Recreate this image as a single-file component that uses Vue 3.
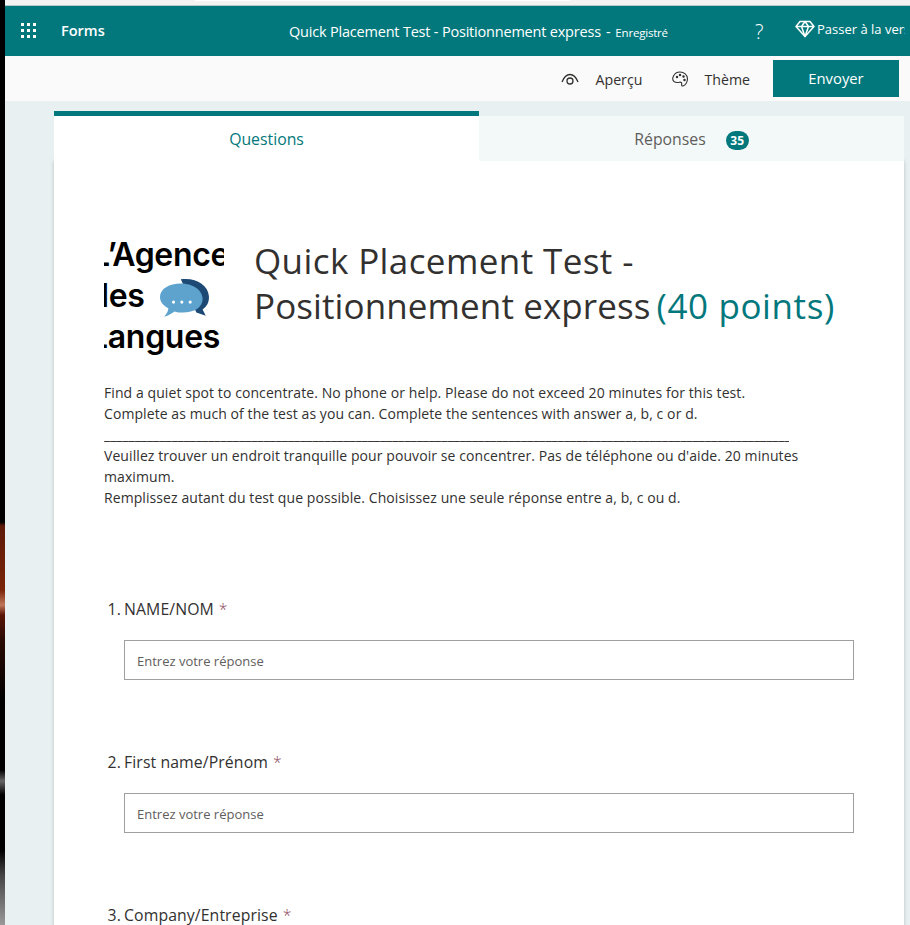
<script setup>
const questions = [
  { num: '1.', label: 'NAME/NOM' },
  { num: '2.', label: 'First name/Prénom' },
  { num: '3.', label: 'Company/Entreprise' }
]
const dots = [0, 1, 2, 3, 4, 5, 6, 7, 8]
const underscores = '_'.repeat(125)
</script>

<template>
  <div class="page">
    <!-- bout de fond d'ecran a gauche -->
    <div class="wallpaper"></div>
    <div class="window">
      <div class="top-edge"><div class="top-edge-tab"></div></div>
      <header class="header">
        <div class="waffle">
          <span v-for="d in dots" :key="d" class="waffle-dot"></span>
        </div>
        <span class="brand">Forms</span>
        <div class="doc-title">
          <span>Quick Placement Test - Positionnement express</span>
          <span class="sep">-</span>
          <span class="saved">Enregistré</span>
        </div>
        <span class="help">?</span>
        <div class="upgrade">
          <svg width="20" height="18" viewBox="0 0 20 18" fill="none" stroke="#fff" stroke-width="1.5" stroke-linejoin="round">
            <path d="M5 1.500h10l4 5-9 10-9-10z" />
            <path d="M1 6.500h18M6.500 6.500l3.500 10 3.500-10M6.500 6.500l3.500-5 3.500 5" />
          </svg>
          <span class="upgrade-text">Passer à la version</span>
        </div>
      </header>

      <div class="command-bar">
        <div class="command command-preview">
          <svg width="18" height="13" viewBox="0 0 18 13" fill="none" stroke="#323130" stroke-width="1.300">
            <path d="M1 9c2-5 5-7.500 8-7.500s6 2.500 8 7.500" />
            <circle cx="9" cy="8" r="3" />
          </svg>
          <span>Aperçu</span>
        </div>
        <div class="command command-theme">
          <svg width="17" height="17" viewBox="0 0 17 17" fill="none" stroke="#323130" stroke-width="1.100">
            <path d="M8 1c4 0 7.500 2.800 7.500 6.800 0 3.500-2.200 6.700-4.500 7.200-1.500.3-1.500-1-1.300-2 .2-1.300-.7-2.200-2.200-1.800-2 .5-4 .4-5.500-.7C.6 9.300.5 7 1.500 5 2.700 2.500 5 1 8 1z" />
            <circle cx="5" cy="6" r=".7" fill="#323130" />
            <circle cx="8" cy="4" r=".7" fill="#323130" />
            <circle cx="11.500" cy="5.500" r=".7" fill="#323130" />
            <circle cx="12.500" cy="9" r=".7" fill="#323130" />
          </svg>
          <span>Thème</span>
        </div>
        <button class="send">Envoyer</button>
      </div>

      <div class="content">
        <div class="tabs">
          <div class="tab tab-active"><span>Questions</span></div>
          <div class="tab tab-other">
            <span class="tab-label">Réponses</span>
            <span class="badge">35</span>
          </div>
        </div>

        <main class="card">
          <section class="title-row">
            <!-- le logo est coupe a gauche et a droite comme sur l'original -->
            <div class="logo">
              <div class="logo-line logo-first">L’Agence</div>
              <div class="logo-line logo-mid">
                <span>des</span>
                <svg class="bubble" width="52" height="42" viewBox="0 0 50 40">
                  <path d="M20 1c14-2 26 5 27 16 .5 6-2 10-6 13l3 6-9-3z" fill="#1d4a75" />
                  <path d="M20 5c11 0 21 6 21 15 0 8-8 13-19 13-3 0-6 0-8-1-3 2-6 4-10 5 2-2 4-5 4-8C3 26 0 23 0 18 0 10 9 5 20 5z" fill="#5ea3cd" />
                  <circle cx="13" cy="23" r="1.500" fill="#fff" />
                  <circle cx="21" cy="23" r="1.500" fill="#fff" />
                  <circle cx="29" cy="23" r="1.500" fill="#fff" />
                </svg>
              </div>
              <div class="logo-line logo-last">Langues</div>
            </div>
            <h1 class="title">
              <span class="title-first">Quick Placement Test -</span><br />
              Positionnement express<span class="points">(40 points)</span>
            </h1>
          </section>

          <section class="intro">
            <p>Find a quiet spot to concentrate. No phone or help. Please do not exceed 20 minutes for this test.</p>
            <p>Complete as much of the test as you can. Complete the sentences with answer a, b, c or d.</p>
            <p class="rule">{{ underscores }}</p>
            <p>Veuillez trouver un endroit tranquille pour pouvoir se concentrer. Pas de téléphone ou d'aide. 20 minutes maximum.</p>
            <p>Remplissez autant du test que possible. Choisissez une seule réponse entre a, b, c ou d.</p>
          </section>

          <section v-for="q in questions" :key="q.num" class="question">
            <div class="question-label">
              <span class="question-num">{{ q.num }}</span>
              <span>{{ q.label }}</span>
              <span class="star">*</span>
            </div>
            <input class="answer" type="text" placeholder="Entrez votre réponse" />
          </section>
        </main>
      </div>
    </div>
  </div>
</template>

<style scoped>
.page {
  display: flex;
  width: 910px;
  height: 925px;
  overflow: hidden;
  font-family: "Open Sans", "Noto Sans", sans-serif;
  color: #323130;
}

.wallpaper {
  width: 5px;
  flex: none;
  background: linear-gradient(to bottom, #000 0, #000 522px, #5e1a08 526px, #7a2408 590px, #c0765a 605px, #5a1405 615px, #2a0a04 640px, #000 700px, #000 770px, #666 781px, #000 795px, #000 850px, #444 875px, #999 925px);
}

.window {
  flex: 1;
  min-width: 0;
  display: flex;
  flex-direction: column;
  background: #e8f0f2;
}

.top-edge {
  height: 6px;
  flex: none;
  background: #f3f3f3;
  border-bottom: 1px solid #b9c9c9;
  box-sizing: border-box;
  position: relative;
}

.top-edge-tab {
  position: absolute;
  left: 190px;
  right: 340px;
  top: 0;
  height: 1px;
  background: #fff;
}

.header {
  height: 50px;
  flex: none;
  display: flex;
  align-items: center;
  background: #03787c;
  color: #fff;
  white-space: nowrap;
  overflow: hidden;
}

.waffle {
  display: grid;
  grid-template-columns: repeat(3, 3px);
  gap: 3px;
  margin-left: 16px;
  margin-bottom: 1px;
  flex: none;
}

.waffle-dot {
  width: 3px;
  height: 3px;
  background: #fff;
}

.brand {
  margin-left: 25px;
  font-size: 14.500px;
  font-weight: 600;
  width: 228px;
  margin-bottom: 2px;
  flex: none;
}

.doc-title {
  font-size: 14.500px;
  width: 466px;
  display: flex;
  align-items: baseline;
  letter-spacing: -.2px;
  flex: none;
}

.sep {
  margin: 0 5px;
}

.saved {
  font-size: 11.500px;
}

.help {
  font-size: 20px;
  font-weight: 300;
  width: 40px;
  flex: none;
}

.upgrade {
  display: flex;
  align-items: center;
  gap: 2px;
  margin-bottom: 4px;
  flex: none;
}

.upgrade-text {
  font-size: 13px;
  width: 88px;
  overflow: hidden;
}

.command-bar {
  height: 45px;
  flex: none;
  display: flex;
  align-items: center;
  justify-content: flex-end;
  background: #fafafa;
  font-size: 14.200px;
  padding-right: 11px;
}

.command {
  display: flex;
  align-items: center;
  padding-top: 1px;
}

.command-preview {
  gap: 16px;
  margin-right: 30px;
}

.command-theme {
  gap: 15px;
  margin-right: 23px;
}

.send {
  width: 126px;
  height: 37px;
  margin-bottom: 1px;
  border: none;
  background: #03787c;
  color: #fff;
  font: inherit;
  font-size: 14.800px;
}

.content {
  margin: 10px 6px 0 49px;
}

.tabs {
  display: flex;
  height: 50px;
  position: relative;
  z-index: 1;
}

.tab {
  display: flex;
  align-items: center;
  justify-content: center;
  font-size: 15.800px;
  box-sizing: border-box;
}

.tab-active {
  width: 425px;
  background: #fff;
  border-top: 5px solid #03787c;
  color: #03787c;
}

.tab-other {
  flex: 1;
  margin-top: 5px;
  background: #f3f8f9;
  color: #605e5c;
  gap: 20px;
}

.badge {
  width: 23px;
  height: 19px;
  margin-top: 3px;
  border-radius: 10px;
  background: #03787c;
  color: #fff;
  font-size: 12px;
  font-weight: 700;
  line-height: 19px;
  text-align: center;
}

.card {
  background: #fff;
  padding: 0 50px;
  height: 800px;
  box-shadow: 0 0 4px rgba(0, 0, 0, .2);
}

.title-row {
  display: flex;
  padding-top: 77px;
}

.logo {
  width: 120px;
  height: 122px;
  margin-top: -4px;
  overflow: hidden;
  flex: none;
  font-family: Inter, "Liberation Sans", sans-serif;
  font-weight: 600;
  font-size: 32px;
  line-height: 41px;
  color: #000;
  white-space: nowrap;
}

.logo-line {
  margin-left: -15px;
  letter-spacing: -.3px;
}

.logo-first {
  margin-left: -12px;
}

.logo-last {
  margin-left: -14px;
}

.logo-mid {
  display: flex;
  align-items: center;
  gap: 15px;
  height: 41px;
}

.bubble {
  flex: none;
  transform: translateY(3px);
}

.title {
  margin: 0 0 0 30px;
  font-size: 35px;
  font-weight: 400;
  line-height: 45px;
  white-space: nowrap;
  color: #323130;
  letter-spacing: .1px;
}

.title-first {
  letter-spacing: .4px;
}

.points {
  margin-left: 6px;
  color: #03787c;
  letter-spacing: .6px;
}

.intro {
  margin-top: 26px;
  width: 710px;
  font-size: 14px;
  line-height: 21px;
  letter-spacing: .08px;
}

.intro p {
  margin: 0;
}

.intro .rule {
  width: 685px;
  overflow: hidden;
  white-space: nowrap;
  letter-spacing: 0;
}

.question {
  margin-bottom: 71px;
}

.intro + .question {
  margin-top: 90px;
}

.question-label {
  display: flex;
  font-size: 15.800px;
  line-height: 22px;
  margin-bottom: 20px;
  letter-spacing: .1px;
}

.question-num {
  width: 20px;
  text-align: right;
  padding-right: 3px;
  box-sizing: border-box;
}

.star {
  margin-left: 5px;
  color: #8e4a5c;
  font-weight: 300;
}

.answer {
  display: block;
  margin-left: 20px;
  width: 730px;
  height: 40px;
  box-sizing: border-box;
  border: 1px solid #a19f9d;
  padding: 1px 12px 0;
  font-family: inherit;
  font-size: 13px;
  outline: none;
}

.answer::placeholder {
  color: #605e5c;
}
</style>

<style>
html,
body {
  margin: 0;
  overflow: hidden;
}
</style>
